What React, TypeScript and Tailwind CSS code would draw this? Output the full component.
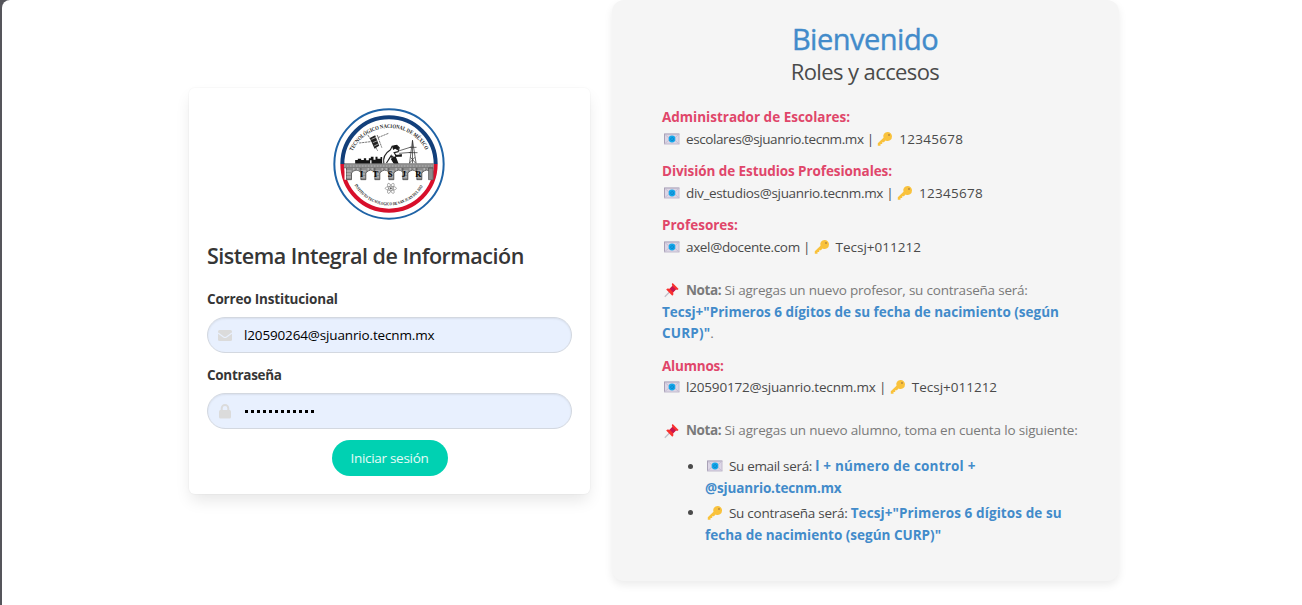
import type { ReactNode } from 'react';

const teeth = [68, 111, 153, 195, 237, 279];
const letters = [
  { c: 'I', x: 112 },
  { c: 'T', x: 154 },
  { c: 'S', x: 198 },
  { c: 'J', x: 239 },
  { c: 'R', x: 282 },
];

function Logo() {
  return (
    <svg width="112" height="112" viewBox="25.5 23 336 336" className="block">
      <defs>
        <path id="arcTop" d="M 84 153 A 122 122 0 0 1 305 153" />
        <path id="arcBottom" d="M 90 254 A 119 119 0 0 0 299 252" />
      </defs>
      <circle cx="193.5" cy="191" r="164" fill="#fff" stroke="#1f63a6" strokeWidth="6" />
      <path d="M53.5 191a140 140 0 0 1 280 0" fill="none" stroke="#123f7a" strokeWidth="12" />
      <path d="M53.5 191a140 140 0 0 0 280 0" fill="none" stroke="#d80f2b" strokeWidth="12" />
      <g fontFamily="Liberation Serif, serif" fontWeight="700" fill="#222">
        <text fontSize="17">
          <textPath href="#arcTop" textLength="272" lengthAdjust="spacingAndGlyphs">TECNOLÓGICO NACIONAL DE MÉXICO</textPath>
        </text>
        <text fontSize="13" fill="#111">
          <textPath href="#arcBottom" textLength="248" lengthAdjust="spacingAndGlyphs">INSTITUTO TECNOLOGICO DE SAN JUAN DEL RIO</textPath>
        </text>
      </g>
      <g stroke="#333" strokeWidth="2" fill="none">
        <path d="M104 128l34-4M160 112l32-13M130 104l30 48M158 104l14 38" strokeDasharray="7 2" />
      </g>
      <path d="M136 113l16-8 12 31-14 9z" fill="#222" />
      <path d="M141 117l14-6M145 127l14-6M149 137l12-6" stroke="#ddd" strokeWidth="2" />
      <path d="M92 192v-13h8v-4h10v4h8v-5h7v6h12v12zM141 192v-12h-8v-6h6v-5h8v9h6v-9h6v6h9v-5h5v22z" fill="#151515" />
      <path d="M178 190c-3-17 4-32 20-42l5-10 14-3 7 7-3 12-12 3 6 10 17-4M186 188l14-22 8 22M204 166l10 22" fill="#fff" stroke="#222" strokeWidth="3.5" />
      <path d="M203 139l12-5 9 8-5 8-7-5-6 4zM211 163h21v6h-18zM199 176l14-9 10 25h-14z" fill="#181818" />
      <path d="M222 152l38-12M224 159l37-3M264 120l-9 70M264 120l11 70M256 141h20M253 157h26M258 171l15 17M271 171l-16 17M264 120v69" stroke="#333" strokeWidth="2.2" fill="none" />
      <path d="M60 190h266v48h-266z" fill="#fff" />
      <rect x="60" y="190" width="266" height="13" fill="#8c8c8c" stroke="#444" strokeWidth="1.2" />
      <path d="M58 197h269" stroke="#ddd" strokeWidth="1.5" strokeDasharray="5 4" />
      {teeth.map((x) => (
        <g key={x}>
          <path d={`M${x - 2} 203h43v11q-16-12-28 4v20h-15z`} fill="#8c8c8c" />
          <path d={`M${x - 2} 203v35h15v-20q13-16 28-2`} fill="none" stroke="#333" strokeWidth="2" />
          <path d={`M${x - 2} 212h15M${x - 2} 221h13M${x - 2} 230h13M${x + 20} 203v7M${x + 32} 203v7`} stroke="#e4e4e4" strokeWidth="2" />
        </g>
      ))}
      <path d="M312 203h14v35h-14z" fill="#8c8c8c" stroke="#333" strokeWidth="1.5" />
      <g fontFamily="Liberation Serif, serif" fontWeight="700" fontSize="25" fill="#000" textAnchor="middle">
        {letters.map((l) => (
          <text key={l.c} x={l.x - 1} y="231">{l.c}</text>
        ))}
      </g>
      <g fill="none" stroke="#666" strokeWidth="1.5">
        <ellipse cx="199" cy="264" rx="17" ry="6" />
        <ellipse cx="199" cy="264" rx="17" ry="6" transform="rotate(60 199 264)" />
        <ellipse cx="199" cy="264" rx="17" ry="6" transform="rotate(120 199 264)" />
        <circle cx="199" cy="264" r="2.5" fill="#333" />
      </g>
    </svg>
  );
}

function Mail() {
  return (
    <svg width="16" height="16" viewBox="0 0 16 16" className="ml-[2px] mr-[6px] shrink-0">
      <rect x="0.5" y="2.5" width="14.5" height="10.500" fill="#dcd6e6" />
      <path d="M0 3h15.500M.5 3v10" stroke="#a9a1b6" />
      <path d="M0 13h15.500M15 3v10" stroke="#c2bbce" />
      <path d="M1 3.500l5 4.500-5 4.500M14.500 3.500l-5 4.500 5 4.500" fill="none" stroke="#bfb7cc" strokeWidth=".8" />
      <circle cx="8" cy="8" r="3.400" fill="#14a8ea" />
      <path d="M9.300 9.300c-2 .8-2.800-.2-2.600-1.500.4-1.500 2.700-1.700 2.900 0 .1 1-.5 1.300-.9.600" fill="none" stroke="#0b78c0" strokeWidth=".7" />
    </svg>
  );
}

function Key() {
  return (
    <svg width="16" height="16" viewBox="0 0 16 16" className="ml-[2px] mr-[6px] shrink-0">
      <path d="M10.500 1a4.300 4.300 0 0 0-4 5.700L.8 12.200v2.500h2.700v-1.700h1.700v-1.700h1.700l1.700-1.800A4.400 4.400 0 0 0 15 5.300 4.400 4.400 0 0 0 10.500 1z" fill="#f9c23c" />
      <circle cx="12" cy="3.900" r="1" fill="#b98a3e" />
    </svg>
  );
}

function Pin() {
  return (
    <svg width="16" height="16" viewBox="0 0 16 16" className="ml-[2px] mr-[6px] shrink-0">
      <path d="M.8 14.800L6 9.500" stroke="#c3bfc9" strokeWidth="1.300" />
      <path d="M8.700 1l5.900 5.900-1.400 1-1.300-.3-2.700 2.700.2 2.300-1.100 1.100L2.200 7.600l1.200-1 2.300.2 2.600-2.700L7.800 2z" fill="#f8312f" />
      <path d="M8.300 4.100l3.600 3.500-2.700 2.700-3.500-3.500z" fill="#c6154f" />
    </svg>
  );
}

function Line({ children, className = '' }: { children: ReactNode; className?: string }) {
  return <div className={`flex h-[21.6px] items-center whitespace-pre ${className}`}>{children}</div>;
}

interface RoleProps {
  title: string;
  email: string;
  secret: string;
  titleClass?: string;
  emailClass: string;
  secretClass?: string;
}

function Role({ title, email, secret, titleClass = '', emailClass, secretClass = '' }: RoleProps) {
  return (
    <div>
      <Line className={`font-bold text-[#e0466a] ${titleClass}`}>{title}</Line>
      <Line>
        <Mail />
        <span className={emailClass}>{email} |</span>
        <span className="w-[1.5px]" />
        <Key />
        <span className={secretClass}>{secret}</span>
      </Line>
    </div>
  );
}

function Field({ icon, children }: { icon: ReactNode; children: ReactNode }) {
  return (
    <div className="flex h-9 items-center rounded-full border border-[#d3d8e0] bg-[#e8f0fe] pl-[10px] shadow-[inset_0_1px_2px_rgba(10,10,10,0.07)]">
      <span className="flex w-[26px]">{icon}</span>
      {children}
    </div>
  );
}

export default function App() {
  return (
    <div className="h-[605px] overflow-hidden bg-[#55555b] pl-[2px] font-['Open_Sans','Noto_Sans',sans-serif] text-[13.5px] text-[#4a4a4a]">
      <div className="flex h-full items-start rounded-tl-[8px] bg-white pl-[187px]">
        <section className="mt-[88px] h-[406px] w-[401px] rounded-[6px] bg-white px-[18px] pt-[19.500px] shadow-[0_8px_16px_-2px_rgba(10,10,10,0.1),0_0_0_1px_rgba(10,10,10,0.02)]">
          <div className="flex justify-center pr-px">
            <Logo />
          </div>
          <h1 className="mt-[19.500px] h-[34px] whitespace-nowrap text-[21.5px] font-semibold leading-[34px] tracking-[-0.5px] text-[#363636]">Sistema Integral de Información</h1>
          <div className="mt-[15px] h-[22px] whitespace-nowrap font-bold leading-[22px] tracking-[-0.18px] text-[#363636]">Correo Institucional</div>
          <div className="mt-[7px]">
            <Field
              icon={
                <svg width="14" height="11" viewBox="0 0 14 11">
                  <rect width="14" height="11" rx="1.500" fill="#dbdbdb" />
                  <path d="M0 3l5.500 4q1.500 1 3 0L14 3" fill="none" stroke="#e8f0fe" strokeWidth="1.200" />
                </svg>
              }
            >
              <span className="pt-px tracking-[-0.15px] text-black">l20590264@sjuanrio.tecnm.mx</span>
            </Field>
          </div>
          <div className="mt-[11px] h-[22px] whitespace-nowrap font-bold leading-[22px] tracking-[-0.3px] text-[#363636]">Contraseña</div>
          <div className="mt-[7px]">
            <Field
              icon={
                <svg width="14" height="15" viewBox="0 0 14 15">
                  <rect x="1" y="6" width="12" height="8.500" rx="1.500" fill="#dbdbdb" />
                  <path d="M3.700 7V4.300a3.300 3.300 0 0 1 6.600 0V7" fill="none" stroke="#dbdbdb" strokeWidth="2" />
                </svg>
              }
            >
              <span className="ml-px flex gap-[3px]">
                {Array.from({ length: 12 }, (_, i) => (
                  <i key={i} className="size-[3px] bg-black" />
                ))}
              </span>
            </Field>
          </div>
          <div className="mt-[11px] flex justify-center">
            <button className="h-9 w-[116px] whitespace-nowrap rounded-full bg-[#00d1b2] tracking-[-0.3px] text-white/90">Iniciar sesión</button>
          </div>
        </section>

        <aside className="ml-[22px] h-[581px] w-[507px] rounded-[12px] bg-[#f5f5f5] pl-[50px] shadow-[0_4px_8px_rgba(0,0,0,0.08)]">
          <div className="mr-[51px] pt-[22px] text-center">
            <h2 className="h-[34px] text-[29px] leading-[34px] tracking-[-0.5px] text-[#428bca] [-webkit-text-stroke:0.4px_#428bca]">Bienvenido</h2>
            <p className="h-[30px] text-[22px] leading-[30px] tracking-[-0.6px]">Roles y accesos</p>
          </div>
          <div className="mt-[20.600px] flex flex-col gap-[10.800px]">
            <Role title="Administrador de Escolares:" email="escolares@sjuanrio.tecnm.mx" secret="12345678" emailClass="tracking-[-0.4px]" secretClass="tracking-[0.29px]" />
            <Role title="División de Estudios Profesionales:" email="div_estudios@sjuanrio.tecnm.mx" secret="12345678" titleClass="tracking-[-0.08px]" emailClass="tracking-[-0.33px]" secretClass="tracking-[0.29px]" />
            <Role title="Profesores:" email="axel@docente.com" secret="Tecsj+011212" emailClass="tracking-[-0.35px]" />
          </div>
          <div className="mt-[21.600px] text-[#7a7a7a]">
            <Line>
              <Pin />
              <b className="tracking-[-0.4px]">Nota:</b>
              <span className="tracking-[-0.21px]"> Si agregas un nuevo profesor, su contraseña será:</span>
            </Line>
            <Line className="font-bold text-[#428bca]">Tecsj+"Primeros 6 dígitos de su fecha de nacimiento (según</Line>
            <Line>
              <b className="tracking-[0.2px] text-[#428bca]">CURP)"</b>.
            </Line>
          </div>
          <div className="mt-[10.800px]">
            <Role title="Alumnos:" email="l20590172@sjuanrio.tecnm.mx" secret="Tecsj+011212" titleClass="tracking-[-0.2px]" emailClass="tracking-[-0.18px]" />
          </div>
          <Line className="mt-[21.600px] text-[#7a7a7a]">
            <Pin />
            <b className="tracking-[-0.4px]">Nota:</b>
            <span className="tracking-[-0.17px]"> Si agregas un nuevo alumno, toma en cuenta lo siguiente:</span>
          </Line>
          <ul className="mt-[14.400px] flex flex-col gap-[3.600px]">
            <li className="flex">
              <i className="ml-[26px] mr-[12px] mt-[8px] size-[5px] rounded-full bg-[#4a4a4a]" />
              <div>
                <Line>
                  <Mail />
                  <span className="tracking-[-0.33px]">Su email será: </span>
                  <b className="tracking-[0.2px] text-[#428bca]">l + número de control +</b>
                </Line>
                <Line className="font-bold tracking-[-0.15px] text-[#428bca]">@sjuanrio.tecnm.mx</Line>
              </div>
            </li>
            <li className="flex">
              <i className="ml-[26px] mr-[12px] mt-[8px] size-[5px] rounded-full bg-[#4a4a4a]" />
              <div>
                <Line>
                  <Key />
                  <span className="tracking-[-0.28px]">Su contraseña será: </span>
                  <b className="tracking-[0.1px] text-[#428bca]">Tecsj+"Primeros 6 dígitos de su</b>
                </Line>
                <Line className="font-bold text-[#428bca]">fecha de nacimiento (según CURP)"</Line>
              </div>
            </li>
          </ul>
        </aside>
      </div>
    </div>
  );
}
